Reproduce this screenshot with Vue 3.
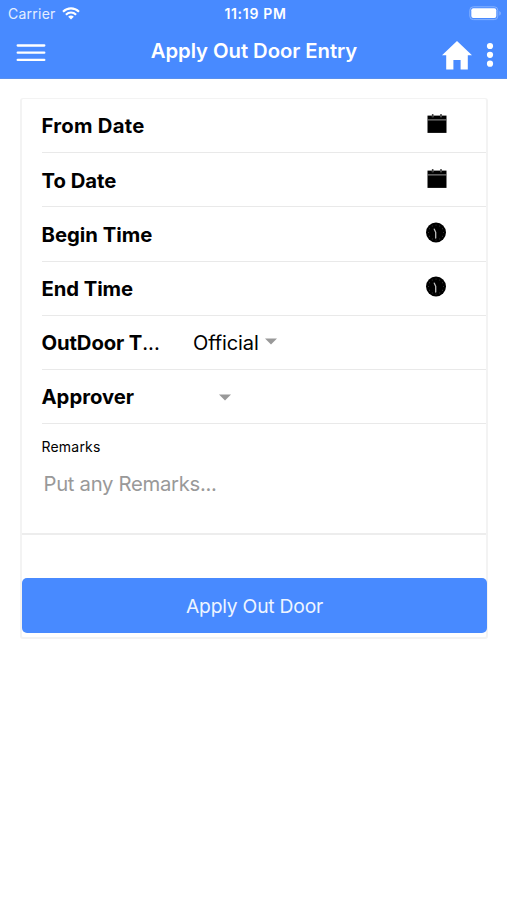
<script setup>
const rows = [
  { label: 'From Date', icon: 'calendar', cls: 'l-from' },
  { label: 'To Date', icon: 'calendar', cls: 'l-to' },
  { label: 'Begin Time', icon: 'clock', cls: 'l-begin' },
  { label: 'End Time', icon: 'clock', cls: 'l-end' }
]
const ticks = Array.from({ length: 12 }, (_, i) => i * 30)
</script>

<template>
  <div class="screen">
    <header class="header">
      <div class="status">
        <div class="carrier">
          <span class="carrier-name">Carrier</span>
          <svg width="18" height="13" viewBox="0 0 18 13">
            <g fill="none" stroke="#fff" stroke-width="2.1">
              <path d="M1 4.7C5.6.3 12.4.3 17 4.7" />
              <path d="M3.9 7.7c3-2.8 7.2-2.8 10.2 0" />
            </g>
            <path d="M6.2 9.7c1.6-1.5 4-1.5 5.6 0L9 12.5z" fill="#fff" />
          </svg>
        </div>
        <span class="time">11:19 PM</span>
        <svg class="battery" width="33" height="15" viewBox="0 0 33 15">
          <rect x=".8" y=".8" width="28" height="12.8" rx="3.5" fill="none" stroke="#86b2ff" stroke-width="1" />
          <rect x="2.3" y="2.3" width="25" height="9.8" rx="2" fill="#fff" />
          <path d="M30.3 5v4.6c2-.8 2-3.8 0-4.6z" fill="#86b2ff" />
        </svg>
      </div>
      <div class="toolbar">
        <svg class="menu" width="30" height="20" viewBox="0 0 30 20">
          <path d="M1.7 2.5h26.6M1.7 9.7h26.6M1.7 16.9h26.6" stroke="#fff" stroke-width="2.3" stroke-linecap="round" />
        </svg>
        <h1 class="title">Apply Out Door Entry</h1>
        <div class="actions">
          <svg width="30" height="29" viewBox="0 0 30 29">
            <path d="M15 0L0 14.3h4.2V28.5h7.2V19h7.2v9.5h7.2V14.3H30z" fill="#fff" />
          </svg>
          <svg class="more" width="8" height="26" viewBox="0 0 8 26">
            <g fill="#fff"><circle cx="4" cy="4" r="3.1" /><circle cx="4" cy="12.8" r="3.1" /><circle cx="4" cy="21.7" r="3.1" /></g>
          </svg>
        </div>
      </div>
    </header>

    <main class="card">
      <div v-for="row in rows" :key="row.label" class="row">
        <span class="label" :class="row.cls">{{ row.label }}</span>
        <svg v-if="row.icon === 'calendar'" class="icon calendar" width="20" height="20" viewBox="0 0 20 20">
          <path d="M.5 1.6h19v17.3H.5z" fill="#000" />
          <path d="M.5 5.9h19" stroke="#999" stroke-width="1" />
          <path d="M5.7.2v3M14 .2v3" stroke="#777" stroke-width="1.8" />
          <path d="M5.7 0v3M14 0v3" stroke="#111" stroke-width=".7" />
        </svg>
        <svg v-else class="icon clock" width="20" height="21" viewBox="0 0 20 21">
          <circle cx="10" cy="10.5" r="10" fill="#000" />
          <g fill="#444">
            <circle v-for="t in ticks" :key="t" cx="10" cy="3" r=".5" :transform="`rotate(${t} 10 10.5)`" />
          </g>
          <path d="M8.3 7.2l1.4 3.1v5.7" fill="none" stroke="#bbb" stroke-width="1.3" stroke-linecap="round" />
        </svg>
      </div>
      <div class="row">
        <span class="label clipped">OutDoor T<span class="dots">...</span></span>
        <span class="value">Official</span>
        <svg class="caret up" width="12" height="7" viewBox="0 0 12 7"><path d="M0 .4h12L6 6.4z" fill="#999" /></svg>
      </div>
      <div class="row">
        <span class="label clipped l-approver">Approver</span>
        <svg class="caret second" width="12" height="7" viewBox="0 0 12 7"><path d="M0 .4h12L6 6.4z" fill="#999" /></svg>
      </div>
      <div class="remarks">
        <div class="remarks-label">Remarks</div>
        <div class="placeholder">Put any Remarks...</div>
      </div>
      <button class="submit"><span>Apply Out Door</span></button>
    </main>
  </div>
</template>

<style>
body { background: #fff; }
</style>

<style scoped>
.screen {
  height: 900px;
  overflow: hidden;
  background: #fff;
  color: #000;
  font-family: Inter, sans-serif;
}
.header {
  box-sizing: border-box;
  height: 79px;
  background: #488aff;
  color: #fff;
  border-bottom: 1px solid #5a90ee;
}
.status {
  display: grid;
  grid-template-columns: 1fr auto 1fr;
  height: 27px;
  align-items: center;
  padding: 0 5px 0 8px;
}
.carrier { display: flex; align-items: center; gap: 6px; }
.carrier-name { font-size: 14px; letter-spacing: 0.25px; color: #e4eeff; }
.time { font-size: 14px; font-weight: 600; letter-spacing: 0.7px; margin-left: 1px; }
.battery { justify-self: end; }
.toolbar {
  display: grid;
  grid-template-columns: 1fr auto 1fr;
  height: 51px;
  padding: 0 13px 0 16px;
}
.menu { margin-top: 16px; }
.title { margin: 11px 0 0 -2px; font-size: 20.3px; line-height: 26px; font-weight: 600; letter-spacing: -0.05px; white-space: nowrap; }
.actions { display: flex; gap: 14px; justify-self: end; padding-top: 14px; }
.more { margin-top: 1px; }
.card {
  box-sizing: border-box;
  width: 468px;
  height: 541px;
  margin: 19px 0 0 20px;
  border: 2px solid #f3f3f3;
  border-top-width: 1px;
  border-radius: 3px;
}
.row {
  box-sizing: border-box;
  display: flex;
  align-items: center;
  height: 54.2px;
  margin-left: 19.5px;
  padding: 1.5px 40.5px 0 0;
  border-bottom: 1px solid #e9e9e9;
}
.label {
  flex: 1;
  font-size: 20.3px;
  line-height: 26px;
  font-weight: 700;
  letter-spacing: -0.12px;
  white-space: nowrap;
}
.l-from { letter-spacing: 0.25px; }
.l-to { letter-spacing: 0; }
.l-begin { letter-spacing: 0; }
.l-end { letter-spacing: -0.08px; }
.l-approver { letter-spacing: -0.02px; }
.clipped { flex: 0 0 151.5px; }
.dots { font-weight: 400; letter-spacing: 0; }
.icon { margin-top: -4px; }
.calendar { margin-right: -1px; }
.value { font-size: 20px; letter-spacing: -0.1px; }
.caret { margin-left: 6px; }
.caret.up { margin-top: -4px; }
.caret.second { margin-left: 26px; }
.remarks {
  box-sizing: border-box;
  height: 110.8px;
  padding: 13px 0 0 19.5px;
  border-bottom: 2px solid #ededed;
}
.remarks-label { font-size: 14px; line-height: 20px; letter-spacing: .2px; }
.placeholder { margin: 14px 0 0 2px; font-size: 20.3px; line-height: 26px; letter-spacing: -0.3px; color: #999; }
.submit {
  display: flex;
  width: 465px;
  height: 55px;
  margin: 43px 0 0 0;
  padding: 2px 0 0;
  align-items: center;
  justify-content: center;
  border: 0;
  border-radius: 5px;
  background: #488aff;
  color: #eef5ff;
  font: 400 19.3px Inter, sans-serif;
  letter-spacing: -0.22px;
}
</style>
